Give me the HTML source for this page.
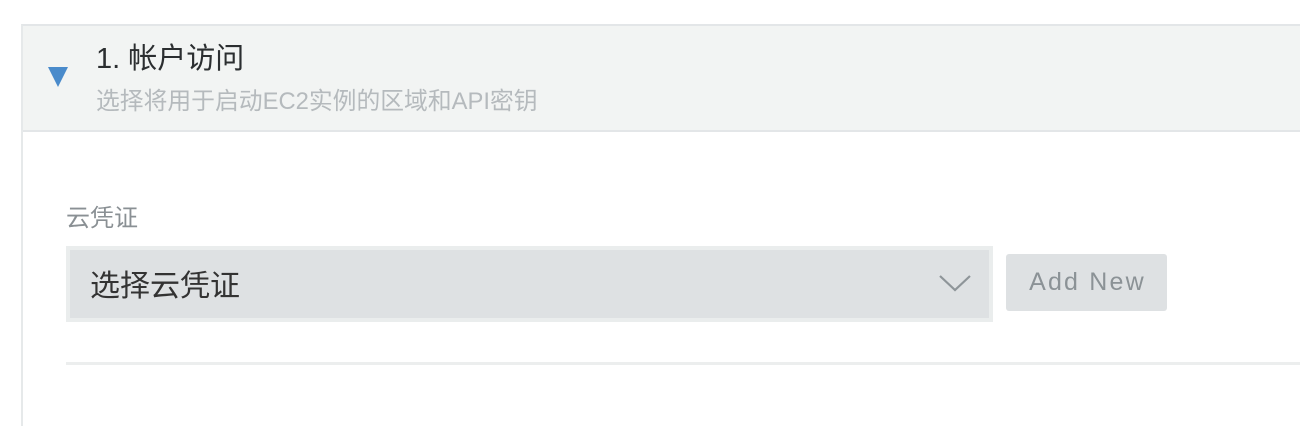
<!DOCTYPE html>
<html><head><meta charset="utf-8"><style>
body{margin:0;width:1300px;height:414px;overflow:hidden;background:#fff;font-family:"Liberation Sans","Noto Sans CJK SC",sans-serif;position:relative}
.panel{position:absolute;left:21px;top:24px;width:1300px;height:400px;border-left:2px solid #e6e9ea;border-top:2px solid #e3e6e8}
.head{position:absolute;left:0;top:0;width:100%;height:104px;background:#f2f4f3;border-bottom:2px solid #e3e6e8}
.tri{position:absolute;left:25px;top:41px;width:0;height:0;border-left:10.5px solid transparent;border-right:10.5px solid transparent;border-top:20px solid #4a8bcb}
.t{position:absolute;left:73px;top:9px;font-size:29px;color:#2b2e30;white-space:nowrap}
.s{position:absolute;left:73px;top:55px;font-size:23.8px;color:#b5babd;white-space:nowrap}
.abs{position:absolute;white-space:nowrap}
</style></head><body>
<div class="panel"><div class="head"><div class="tri"></div><div class="t">1. 帐户访问</div><div class="s">选择将用于启动EC2实例的区域和API密钥</div></div></div>
<div class="abs" style="left:66px;top:198px;font-size:24px;color:#8a9094">云凭证</div>
<div class="abs" style="left:66px;top:246px;width:919px;height:68px;border:4px solid #eaeded;background:#dee1e3"></div>
<div class="abs" style="left:90px;top:261px;font-size:30px;color:#333">选择云凭证</div>
<svg class="abs" style="left:935px;top:270px" width="40" height="26"><path d="M5 6 L20 20 L35 6" fill="none" stroke="#8e9599" stroke-width="2.2"/></svg>
<div class="abs" style="left:1006px;top:254px;width:161px;height:57px;background:#dee1e3;border-radius:3px;color:#8b9296;font-size:25px;line-height:57px;text-align:center;letter-spacing:2.2px;text-indent:2px">Add New</div>
<div class="abs" style="left:66px;top:362px;width:1234px;height:3px;background:#eceeee"></div>
</body></html>
